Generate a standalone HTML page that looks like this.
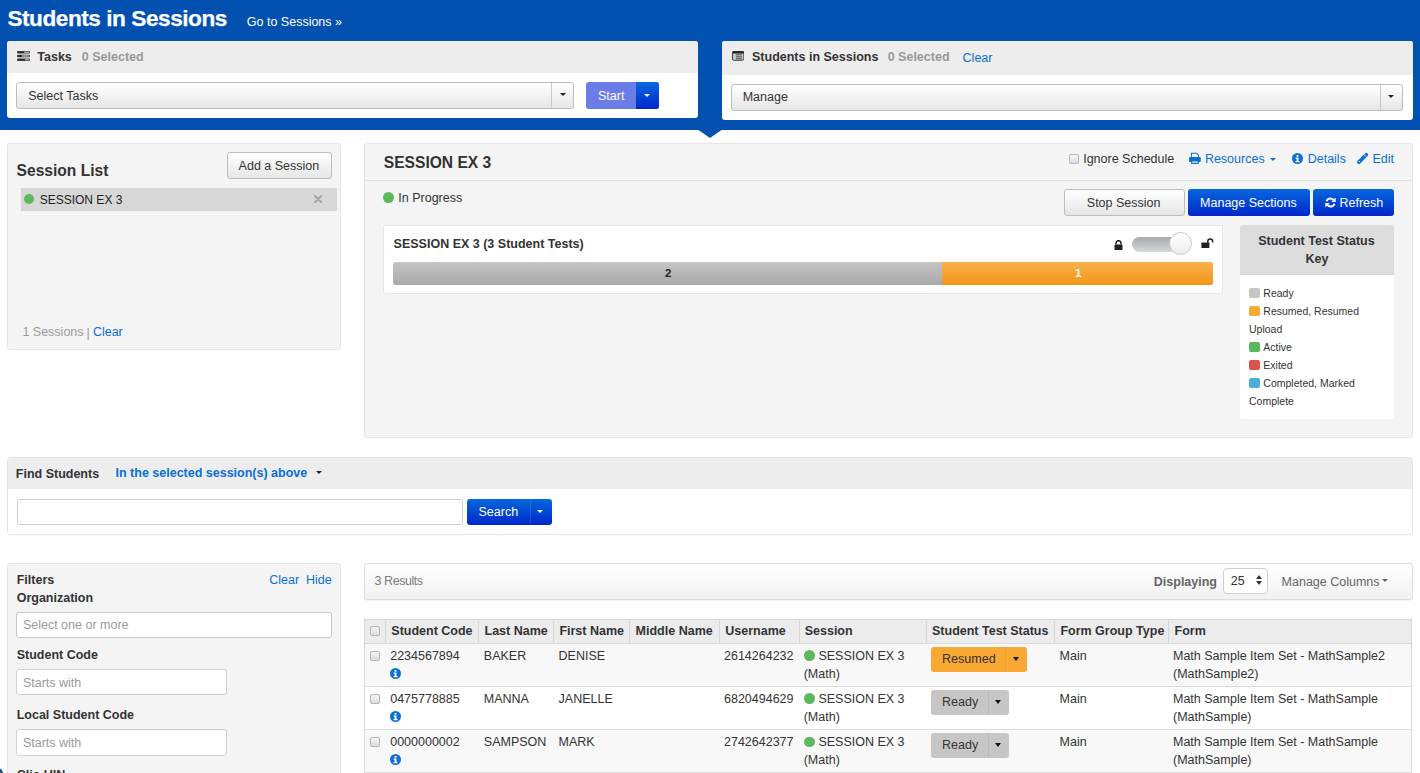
<!DOCTYPE html>
<html><head><meta charset="utf-8"><title>Students in Sessions</title>
<style>
html,body{margin:0;padding:0;}
body{width:1420px;height:773px;overflow:hidden;position:relative;background:#fff;font-family:"Liberation Sans",sans-serif;}
.t{position:absolute;line-height:1;white-space:nowrap;}
.b{position:absolute;}
</style></head><body>
<div class="b" style="left:0px;top:0px;width:1420px;height:130px;background:#0251b1;"></div>
<div class="t" style="left:7.4px;top:8.00px;font-size:22.6px;font-weight:bold;color:#fff;letter-spacing:-0.45px;-webkit-text-stroke:0.25px #fff;">Students in Sessions</div>
<div class="t" style="left:246.8px;top:16.00px;font-size:12.5px;font-weight:normal;color:#fff;">Go to Sessions &raquo;</div>
<div class="b" style="left:697px;top:129px;width:0;height:0;border-left:13.5px solid transparent;border-right:13.5px solid transparent;border-top:9px solid #0251b1;"></div>
<div class="b" style="left:7px;top:41px;width:691px;height:77px;background:#fff;border-radius:3px;overflow:hidden;"><div style="position:absolute;left:0;top:0;right:0;height:32px;background:#ededed;"></div></div>
<svg class="b" style="left:17px;top:51px" width="13" height="10" viewBox="0 0 13 10"><rect x="0" y="0" width="13" height="2.6" rx="1" fill="#333"/><rect x="7" y="0.6" width="5.3" height="1.4" rx=".7" fill="#aaa"/><rect x="0" y="3.7" width="13" height="2.6" rx="1" fill="#333"/><rect x="5" y="4.3" width="7.3" height="1.4" rx=".7" fill="#aaa"/><rect x="0" y="7.4" width="13" height="2.6" rx="1" fill="#333"/><rect x="8" y="8" width="4.3" height="1.4" rx=".7" fill="#aaa"/></svg>
<div class="t" style="left:37.3px;top:51.00px;font-size:12.5px;font-weight:bold;color:#333;">Tasks</div>
<div class="t" style="left:81.8px;top:51.00px;font-size:12.5px;font-weight:bold;color:#999;">0 Selected</div>
<div class="b" style="left:16px;top:82px;width:558px;height:27px;background:linear-gradient(#ffffff,#e6e6e6);border:1px solid #bdbdbd;border-radius:3px;box-sizing:border-box;"></div>
<div class="b" style="left:551px;top:83px;width:1px;height:25px;background:#c8c8c8;"></div>
<div class="b" style="left:559.5px;top:93.2px;width:0;height:0;border-left:3.5px solid transparent;border-right:3.5px solid transparent;border-top:3.5px solid #222;"></div>
<div class="t" style="left:28.2px;top:90.00px;font-size:12.5px;font-weight:normal;color:#333;">Select Tasks</div>
<div class="b" style="left:586px;top:82px;width:73px;height:27px;background:#6a7de6;border-radius:3px;overflow:hidden;"><div style="position:absolute;left:50px;top:0;right:0;bottom:0;background:linear-gradient(#0a6ae0,#0026cc);"></div></div>
<div class="t" style="left:598.0px;top:90.00px;font-size:12.5px;font-weight:normal;color:#fff;">Start</div>
<div class="b" style="left:644.0px;top:93.8px;width:0;height:0;border-left:3.5px solid transparent;border-right:3.5px solid transparent;border-top:3.5px solid #fff;"></div>
<div class="b" style="left:722px;top:41px;width:691px;height:79px;background:#fff;border-radius:3px;overflow:hidden;"><div style="position:absolute;left:0;top:0;right:0;height:34px;background:#ededed;"></div></div>
<svg class="b" style="left:731.9px;top:50.9px" width="12.4" height="9.8" viewBox="0 0 12.4 9.8"><rect x="0.5" y="0.5" width="11.4" height="8.8" rx="1.3" fill="#bdbdbd" stroke="#444" stroke-width="1"/><rect x="0.3" y="0.3" width="11.8" height="2.2" rx="1" fill="#222"/><rect x="4" y="3.3" width="5.9" height="1" fill="#555"/><rect x="4" y="5.3" width="5.9" height="1" fill="#555"/><rect x="4" y="7.2" width="5.9" height="1" fill="#555"/><rect x="1.6" y="3.3" width="1.6" height="1" fill="#ddd"/><rect x="1.6" y="5.3" width="1.6" height="1" fill="#ddd"/><rect x="1.6" y="7.2" width="1.6" height="1" fill="#ddd"/></svg>
<div class="t" style="left:752.0px;top:51.00px;font-size:12.5px;font-weight:bold;color:#333;">Students in Sessions</div>
<div class="t" style="left:887.7px;top:51.00px;font-size:12.5px;font-weight:bold;color:#999;">0 Selected</div>
<div class="t" style="left:962.6px;top:52.00px;font-size:12.5px;font-weight:normal;color:#0a6fd6;">Clear</div>
<div class="b" style="left:731px;top:84px;width:672px;height:27px;background:linear-gradient(#ffffff,#e6e6e6);border:1px solid #bdbdbd;border-radius:3px;box-sizing:border-box;"></div>
<div class="b" style="left:1380px;top:85px;width:1px;height:25px;background:#c8c8c8;"></div>
<div class="b" style="left:1388.3px;top:94.5px;width:0;height:0;border-left:3.5px solid transparent;border-right:3.5px solid transparent;border-top:3.5px solid #222;"></div>
<div class="t" style="left:742.7px;top:91.00px;font-size:12.5px;font-weight:normal;color:#333;">Manage</div>
<div class="b" style="left:7px;top:143px;width:334px;height:207px;background:#f4f4f4;border:1px solid #e5e5e5;border-radius:3px;box-sizing:border-box;"></div>
<div class="t" style="left:16.6px;top:163.00px;font-size:15.6px;font-weight:bold;color:#333;">Session List</div>
<div class="b" style="left:227px;top:152px;width:105px;height:27px;background:linear-gradient(#ffffff,#e6e6e6);border:1px solid #bdbdbd;border-radius:3px;box-sizing:border-box;"></div>
<div class="t" style="left:238.6px;top:160.00px;font-size:12.5px;font-weight:normal;color:#333;">Add a Session</div>
<div class="b" style="left:21px;top:187.5px;width:316px;height:23.5px;background:#d7d7d7;"></div>
<div class="b" style="left:23.5px;top:193.5px;width:10.8px;height:10.8px;border-radius:50%;background:#5cb85c;"></div>
<div class="t" style="left:39.7px;top:194.00px;font-size:12.0px;font-weight:normal;color:#222;">SESSION EX 3</div>
<svg class="b" style="left:313.9px;top:194.7px" width="8.2" height="8.1" viewBox="0 0 8.2 8.1"><path d="M0.9 0.9L7.3 7.2M7.3 0.9L0.9 7.2" stroke="#a3a3a3" stroke-width="2" stroke-linecap="round"/></svg>
<div class="t" style="left:22.4px;top:326.00px;font-size:12.5px;font-weight:normal;color:#999;">1 Sessions</div>
<div class="t" style="left:86.5px;top:327.00px;font-size:12.5px;font-weight:normal;color:#999;">|</div>
<div class="t" style="left:92.9px;top:326.00px;font-size:12.5px;font-weight:normal;color:#0a6fd6;">Clear</div>
<div class="b" style="left:364px;top:143px;width:1049px;height:295px;background:#f4f4f4;border:1px solid #e5e5e5;border-radius:3px;box-sizing:border-box;"></div>
<div class="b" style="left:365px;top:179.5px;width:1047px;height:1.0px;background:#e2e2e2;"></div>
<div class="t" style="left:383.8px;top:155.00px;font-size:15.6px;font-weight:bold;color:#333;">SESSION EX 3</div>
<div class="b" style="left:1069px;top:153.5px;width:10px;height:10.0px;background:linear-gradient(#f6f6f6,#dcdcdc);border:1px solid #b8b8b8;border-radius:2px;box-sizing:border-box;"></div>
<div class="t" style="left:1083.2px;top:153.00px;font-size:12.5px;font-weight:normal;color:#333;">Ignore Schedule</div>
<svg class="b" style="left:1189px;top:152px" width="12" height="12" viewBox="0 0 12 12"><path d="M2.4 5.4V1.2H7.4L9.5 3.3V5.4" fill="#fff" stroke="#0a6fd6" stroke-width="1.05"/><rect x="0" y="5" width="11.8" height="5" rx="1.3" fill="#0a6fd6"/><rect x="2.7" y="8.9" width="6.6" height="2.4" fill="#fff" stroke="#0a6fd6" stroke-width="1.2"/></svg>
<div class="t" style="left:1204.9px;top:153.00px;font-size:12.5px;font-weight:normal;color:#0a6fd6;">Resources</div>
<div class="b" style="left:1269.7px;top:158.2px;width:0;height:0;border-left:3.5px solid transparent;border-right:3.5px solid transparent;border-top:3.5px solid #0a6fd6;"></div>
<svg class="b" style="left:1292.3px;top:152.6px" width="11" height="11" viewBox="0 0 11 11"><circle cx="5.5" cy="5.5" r="5.5" fill="#0a6fd6"/><rect x="4.6" y="2" width="1.9" height="1.7" fill="#fff"/><path d="M3.6 4.5h2.9v3.6h1v1.2H3.6V8.1h1V5.7h-1z" fill="#fff"/></svg>
<div class="t" style="left:1307.7px;top:153.00px;font-size:12.5px;font-weight:normal;color:#0a6fd6;">Details</div>
<svg class="b" style="left:1356px;top:152px" width="13" height="13" viewBox="0 0 13 13"><path d="M2.9 10.1L10.3 2.7" stroke="#0a6fd6" stroke-width="3.7" stroke-linecap="round"/><path d="M7.7 2.2L10.3 4.8" stroke="#f4f4f4" stroke-width="0.8"/><circle cx="3.4" cy="9.6" r="0.7" fill="#f4f4f4"/></svg>
<div class="t" style="left:1372.5px;top:153.00px;font-size:12.5px;font-weight:normal;color:#0a6fd6;">Edit</div>
<div class="b" style="left:383.4px;top:192px;width:10.9px;height:10.9px;border-radius:50%;background:#5cb85c;"></div>
<div class="t" style="left:398.3px;top:192.00px;font-size:12.5px;font-weight:normal;color:#333;">In Progress</div>
<div class="b" style="left:1064px;top:188.5px;width:121px;height:27.0px;background:linear-gradient(#ffffff,#e6e6e6);border:1px solid #bdbdbd;border-radius:3px;box-sizing:border-box;"></div>
<div class="t" style="left:1086.8px;top:197.00px;font-size:12.5px;font-weight:normal;color:#333;">Stop Session</div>
<div class="b" style="left:1188px;top:188.5px;width:122px;height:27.0px;background:linear-gradient(#0568db,#0027cc);border-radius:3px;"></div>
<div class="t" style="left:1200.1px;top:197.00px;font-size:12.5px;font-weight:normal;color:#fff;">Manage Sections</div>
<div class="b" style="left:1313px;top:188.5px;width:81px;height:27.0px;background:linear-gradient(#0568db,#0027cc);border-radius:3px;"></div>
<svg class="b" style="left:1324.8px;top:196.8px" width="11" height="11" viewBox="0 0 11 11"><path d="M9.1 3.8 A4.1 4.1 0 0 0 1.5 4.3" fill="none" stroke="#fff" stroke-width="1.9"/><path d="M10.7 0.6 V5 H6.3 Z" fill="#fff"/><path d="M1.9 7.2 A4.1 4.1 0 0 0 9.5 6.7" fill="none" stroke="#fff" stroke-width="1.9"/><path d="M0.3 10.4 V6 H4.7 Z" fill="#fff"/></svg>
<div class="t" style="left:1339.5px;top:197.00px;font-size:12.5px;font-weight:normal;color:#fff;">Refresh</div>
<div class="b" style="left:383px;top:225px;width:840px;height:69px;background:#fff;border:1px solid #e6e6e6;border-radius:2px;box-sizing:border-box;"></div>
<div class="t" style="left:393.6px;top:238.00px;font-size:12.5px;font-weight:bold;color:#333;">SESSION EX 3 (3 Student Tests)</div>
<div class="b" style="left:393px;top:261.5px;width:820px;height:23.0px;border-radius:3px;overflow:hidden;background:linear-gradient(#c4c4c4,#a9a9a9);"><div style="position:absolute;left:549px;top:0;right:0;bottom:0;background:linear-gradient(#f9b24c,#f29518);"></div></div>
<div class="t" style="left:665.0px;top:268.00px;font-size:11.5px;font-weight:bold;color:#222;">2</div>
<div class="t" style="left:1075.0px;top:268.00px;font-size:11.5px;font-weight:bold;color:#fff;">1</div>
<svg class="b" style="left:1114px;top:239.5px" width="9" height="10.5" viewBox="0 0 9 10.5"><path d="M2 4.6 V3.2 A2.5 2.5 0 0 1 7 3.2 V4.6" fill="none" stroke="#222" stroke-width="1.5"/><rect x="0.5" y="4.5" width="8" height="5.8" rx="0.8" fill="#222"/></svg>
<div class="b" style="left:1132px;top:236.5px;width:59px;height:15.0px;border-radius:8px;background:linear-gradient(#a9aaad,#d6d7d9);"></div>
<div class="b" style="left:1169px;top:232.3px;width:23px;height:23px;border-radius:50%;background:linear-gradient(#ffffff,#ececec);border:1px solid #c9c9c9;box-sizing:border-box;"></div>
<svg class="b" style="left:1200.5px;top:237.5px" width="13" height="10.5" viewBox="0 0 13 10.5"><path d="M6.8 4.8 V3.3 A2.4 2.4 0 0 1 11.6 3.3 V4.6" fill="none" stroke="#222" stroke-width="1.5"/><rect x="0.4" y="4.4" width="8" height="5.8" rx="0.8" fill="#222"/></svg>
<div class="b" style="left:1240px;top:225px;width:154px;height:194px;background:#fff;border-radius:3px;overflow:hidden;"><div style="position:absolute;left:0;top:0;right:0;height:50px;background:#dcdcdc;"></div></div>
<div class="t" style="left:1258.2px;top:235.00px;font-size:12.5px;font-weight:bold;color:#333;">Student Test Status</div>
<div class="t" style="left:1305.5px;top:253.00px;font-size:12.5px;font-weight:bold;color:#333;">Key</div>
<div class="b" style="left:1249px;top:287.8px;width:10.5px;height:10.5px;background:#c6c6c6;border-radius:2px;"></div>
<div class="t" style="left:1263.3px;top:288.00px;font-size:10.5px;font-weight:normal;color:#333;">Ready</div>
<div class="b" style="left:1249px;top:305.8px;width:10.5px;height:10.5px;background:#f9a833;border-radius:2px;"></div>
<div class="t" style="left:1263.3px;top:306.00px;font-size:10.5px;font-weight:normal;color:#333;">Resumed, Resumed</div>
<div class="t" style="left:1249.0px;top:324.00px;font-size:10.5px;font-weight:normal;color:#333;">Upload</div>
<div class="b" style="left:1249px;top:341.7px;width:10.5px;height:10.5px;background:#5cb85c;border-radius:2px;"></div>
<div class="t" style="left:1263.3px;top:342.00px;font-size:10.5px;font-weight:normal;color:#333;">Active</div>
<div class="b" style="left:1249px;top:359.6px;width:10.5px;height:10.5px;background:#d9534f;border-radius:2px;"></div>
<div class="t" style="left:1263.3px;top:360.00px;font-size:10.5px;font-weight:normal;color:#333;">Exited</div>
<div class="b" style="left:1249px;top:377.6px;width:10.5px;height:10.5px;background:#4cb0d6;border-radius:2px;"></div>
<div class="t" style="left:1263.3px;top:378.00px;font-size:10.5px;font-weight:normal;color:#333;">Completed, Marked</div>
<div class="t" style="left:1249.0px;top:396.00px;font-size:10.5px;font-weight:normal;color:#333;">Complete</div>
<div class="b" style="left:7px;top:457px;width:1406px;height:78px;background:#fff;border:1px solid #e5e5e5;border-radius:3px;box-sizing:border-box;overflow:hidden;"><div style="position:absolute;left:0;top:0;right:0;height:31px;background:#ededed;"></div></div>
<div class="t" style="left:15.8px;top:468.00px;font-size:12.5px;font-weight:bold;color:#333;">Find Students</div>
<div class="t" style="left:115.5px;top:467.00px;font-size:12.5px;font-weight:bold;color:#0a6fd6;">In the selected session(s) above</div>
<div class="b" style="left:316.2px;top:471.4px;width:0;height:0;border-left:3.5px solid transparent;border-right:3.5px solid transparent;border-top:3.8px solid #222;"></div>
<div class="b" style="left:17px;top:498.5px;width:446px;height:26.5px;background:#fff;border:1px solid #cfcfcf;border-radius:3px;box-sizing:border-box;"></div>
<div class="b" style="left:467px;top:498.5px;width:85px;height:26.5px;background:linear-gradient(#0568db,#0027cc);border-radius:3px;"><div style="position:absolute;left:63px;top:0;width:1px;bottom:0;background:rgba(255,255,255,0.1);"></div></div>
<div class="t" style="left:478.5px;top:506.00px;font-size:12.5px;font-weight:normal;color:#fff;">Search</div>
<div class="b" style="left:537.3px;top:510.2px;width:0;height:0;border-left:3.5px solid transparent;border-right:3.5px solid transparent;border-top:3.5px solid #fff;"></div>
<div class="b" style="left:7px;top:562.5px;width:334px;height:237.5px;background:#f4f4f4;border:1px solid #e5e5e5;border-radius:3px;box-sizing:border-box;"></div>
<div class="t" style="left:16.7px;top:574.00px;font-size:12.5px;font-weight:bold;color:#333;">Filters</div>
<div class="t" style="left:269.2px;top:574.00px;font-size:12.5px;font-weight:normal;color:#0a6fd6;">Clear</div>
<div class="t" style="left:305.9px;top:574.00px;font-size:12.5px;font-weight:normal;color:#0a6fd6;">Hide</div>
<div class="t" style="left:16.7px;top:592.00px;font-size:12.5px;font-weight:bold;color:#333;">Organization</div>
<div class="b" style="left:16px;top:611.5px;width:316px;height:26.0px;background:#fff;border:1px solid #c8c8c8;border-radius:3px;box-sizing:border-box;"></div>
<div class="t" style="left:22.9px;top:619.00px;font-size:12.5px;font-weight:normal;color:#999;">Select one or more</div>
<div class="t" style="left:16.7px;top:649.00px;font-size:12.5px;font-weight:bold;color:#333;">Student Code</div>
<div class="b" style="left:16px;top:669.2px;width:211px;height:26.299999999999955px;background:#fff;border:1px solid #d2d2d2;border-radius:3px;box-sizing:border-box;"></div>
<div class="t" style="left:22.9px;top:677.00px;font-size:12.5px;font-weight:normal;color:#999;">Starts with</div>
<div class="t" style="left:16.7px;top:709.00px;font-size:12.5px;font-weight:bold;color:#333;">Local Student Code</div>
<div class="b" style="left:16px;top:729.2px;width:211px;height:26.5px;background:#fff;border:1px solid #d2d2d2;border-radius:3px;box-sizing:border-box;"></div>
<div class="t" style="left:22.9px;top:737.00px;font-size:12.5px;font-weight:normal;color:#999;">Starts with</div>
<div class="t" style="left:16.7px;top:769.00px;font-size:12.5px;font-weight:bold;color:#333;">Clio UIN</div>
<div class="b" style="left:-8px;top:768px;width:11px;height:11px;border-radius:50%;background:#1d5a6a;"></div>
<div class="b" style="left:364px;top:562.5px;width:1049px;height:37.0px;background:linear-gradient(#ffffff,#f1f1f1);border:1px solid #dcdcdc;border-radius:3px;box-sizing:border-box;box-shadow:0 1px 1px rgba(0,0,0,0.05);"></div>
<div class="t" style="left:374.6px;top:575.00px;font-size:12.5px;font-weight:normal;color:#7c7c7c;letter-spacing:-0.45px;">3 Results</div>
<div class="t" style="left:1153.8px;top:576.00px;font-size:12.5px;font-weight:bold;color:#666;">Displaying</div>
<div class="b" style="left:1223px;top:567.5px;width:45px;height:26.5px;background:#fff;border:1px solid #d0d0d0;border-radius:4px;box-sizing:border-box;"></div>
<div class="t" style="left:1230.7px;top:575.00px;font-size:12.5px;font-weight:normal;color:#333;">25</div>
<div class="b" style="left:1256px;top:574.5px;width:0;height:0;border-left:3px solid transparent;border-right:3px solid transparent;border-bottom:4.5px solid #333;"></div>
<div class="b" style="left:1256px;top:581px;width:0;height:0;border-left:3px solid transparent;border-right:3px solid transparent;border-top:4.5px solid #333;"></div>
<div class="t" style="left:1281.6px;top:576.00px;font-size:12.5px;font-weight:normal;color:#666;">Manage Columns</div>
<div class="b" style="left:1382.2px;top:578.8px;width:0;height:0;border-left:3.75px solid transparent;border-right:3.75px solid transparent;border-top:3.5px solid #666;"></div>
<div class="b" style="left:364px;top:618.5px;width:1048px;height:154.5px;background:#fff;border:1px solid #d9d9d9;box-sizing:border-box;"></div>
<div class="b" style="left:365px;top:619.5px;width:1046px;height:23.5px;background:#ececec;"></div>
<div class="b" style="left:365px;top:644px;width:1046px;height:42px;background:#f8f8f8;"></div>
<div class="b" style="left:365px;top:643px;width:1046px;height:1px;background:#dadada;"></div>
<div class="b" style="left:365px;top:687px;width:1046px;height:42px;background:#ffffff;"></div>
<div class="b" style="left:365px;top:686px;width:1046px;height:1px;background:#dadada;"></div>
<div class="b" style="left:365px;top:730px;width:1046px;height:42px;background:#f8f8f8;"></div>
<div class="b" style="left:365px;top:729px;width:1046px;height:1px;background:#dadada;"></div>
<div class="b" style="left:365px;top:772px;width:1046px;height:1px;background:#dadada;"></div>
<div class="b" style="left:385px;top:619.5px;width:1px;height:23.5px;background:#d6d6d6;"></div>
<div class="b" style="left:478px;top:619.5px;width:1px;height:23.5px;background:#d6d6d6;"></div>
<div class="b" style="left:553px;top:619.5px;width:1px;height:23.5px;background:#d6d6d6;"></div>
<div class="b" style="left:629px;top:619.5px;width:1px;height:23.5px;background:#d6d6d6;"></div>
<div class="b" style="left:719px;top:619.5px;width:1px;height:23.5px;background:#d6d6d6;"></div>
<div class="b" style="left:799px;top:619.5px;width:1px;height:23.5px;background:#d6d6d6;"></div>
<div class="b" style="left:926px;top:619.5px;width:1px;height:23.5px;background:#d6d6d6;"></div>
<div class="b" style="left:1054px;top:619.5px;width:1px;height:23.5px;background:#d6d6d6;"></div>
<div class="b" style="left:1168px;top:619.5px;width:1px;height:23.5px;background:#d6d6d6;"></div>
<div class="b" style="left:370px;top:625.5px;width:10px;height:10.0px;background:linear-gradient(#f6f6f6,#dcdcdc);border:1px solid #b5b5b5;border-radius:2px;box-sizing:border-box;"></div>
<div class="t" style="left:391.3px;top:625.00px;font-size:12.5px;font-weight:bold;color:#333;">Student Code</div>
<div class="t" style="left:484.5px;top:625.00px;font-size:12.5px;font-weight:bold;color:#333;">Last Name</div>
<div class="t" style="left:559.4px;top:625.00px;font-size:12.5px;font-weight:bold;color:#333;">First Name</div>
<div class="t" style="left:635.6px;top:625.00px;font-size:12.5px;font-weight:bold;color:#333;">Middle Name</div>
<div class="t" style="left:725.3px;top:625.00px;font-size:12.5px;font-weight:bold;color:#333;">Username</div>
<div class="t" style="left:804.7px;top:625.00px;font-size:12.5px;font-weight:bold;color:#333;">Session</div>
<div class="t" style="left:932.0px;top:625.00px;font-size:12.5px;font-weight:bold;color:#333;">Student Test Status</div>
<div class="t" style="left:1060.4px;top:625.00px;font-size:12.5px;font-weight:bold;color:#333;">Form Group Type</div>
<div class="t" style="left:1174.5px;top:625.00px;font-size:12.5px;font-weight:bold;color:#333;">Form</div>
<div class="b" style="left:370px;top:650.8px;width:10px;height:10.0px;background:linear-gradient(#f6f6f6,#dcdcdc);border:1px solid #b5b5b5;border-radius:2px;box-sizing:border-box;"></div>
<div class="t" style="left:390.2px;top:650.00px;font-size:12.5px;font-weight:normal;color:#333;">2234567894</div>
<svg class="b" style="left:390.2px;top:668.2px" width="11" height="11" viewBox="0 0 11 11"><circle cx="5.5" cy="5.5" r="5.5" fill="#0a6fd6"/><rect x="4.6" y="2" width="1.9" height="1.7" fill="#fff"/><path d="M3.6 4.5h2.9v3.6h1v1.2H3.6V8.1h1V5.7h-1z" fill="#fff"/></svg>
<div class="t" style="left:483.8px;top:650.00px;font-size:12.5px;font-weight:normal;color:#333;">BAKER</div>
<div class="t" style="left:558.6px;top:650.00px;font-size:12.5px;font-weight:normal;color:#333;">DENISE</div>
<div class="t" style="left:724.0px;top:650.00px;font-size:12.5px;font-weight:normal;color:#333;">2614264232</div>
<div class="b" style="left:804px;top:650.3px;width:10.8px;height:10.8px;border-radius:50%;background:#5cb85c;"></div>
<div class="t" style="left:818.4px;top:650.00px;font-size:12.5px;font-weight:normal;color:#333;">SESSION EX 3</div>
<div class="t" style="left:803.7px;top:668.00px;font-size:12.5px;font-weight:normal;color:#333;">(Math)</div>
<div class="b" style="left:931px;top:647.2px;width:96px;height:24.899999999999977px;background:#f9a833;border-radius:3px;"><div style="position:absolute;left:74px;top:0;width:1px;bottom:0;background:rgba(0,0,0,0.06);"></div></div>
<div class="t" style="left:942.1px;top:653.00px;font-size:12.5px;font-weight:normal;color:#333;">Resumed</div>
<div class="b" style="left:1012.8px;top:657.1px;width:0;height:0;border-left:3.5px solid transparent;border-right:3.5px solid transparent;border-top:4px solid #111;"></div>
<div class="t" style="left:1059.6px;top:650.00px;font-size:12.5px;font-weight:normal;color:#333;">Main</div>
<div class="t" style="left:1173.0px;top:650.00px;font-size:12.5px;font-weight:normal;color:#333;">Math Sample Item Set - MathSample2</div>
<div class="t" style="left:1173.0px;top:668.00px;font-size:12.5px;font-weight:normal;color:#333;">(MathSample2)</div>
<div class="b" style="left:370px;top:693.9px;width:10px;height:10.0px;background:linear-gradient(#f6f6f6,#dcdcdc);border:1px solid #b5b5b5;border-radius:2px;box-sizing:border-box;"></div>
<div class="t" style="left:390.2px;top:693.00px;font-size:12.5px;font-weight:normal;color:#333;">0475778885</div>
<svg class="b" style="left:390.2px;top:711.3px" width="11" height="11" viewBox="0 0 11 11"><circle cx="5.5" cy="5.5" r="5.5" fill="#0a6fd6"/><rect x="4.6" y="2" width="1.9" height="1.7" fill="#fff"/><path d="M3.6 4.5h2.9v3.6h1v1.2H3.6V8.1h1V5.7h-1z" fill="#fff"/></svg>
<div class="t" style="left:483.8px;top:693.00px;font-size:12.5px;font-weight:normal;color:#333;">MANNA</div>
<div class="t" style="left:558.6px;top:693.00px;font-size:12.5px;font-weight:normal;color:#333;">JANELLE</div>
<div class="t" style="left:724.0px;top:693.00px;font-size:12.5px;font-weight:normal;color:#333;">6820494629</div>
<div class="b" style="left:804px;top:693.4px;width:10.8px;height:10.8px;border-radius:50%;background:#5cb85c;"></div>
<div class="t" style="left:818.4px;top:693.00px;font-size:12.5px;font-weight:normal;color:#333;">SESSION EX 3</div>
<div class="t" style="left:803.7px;top:711.00px;font-size:12.5px;font-weight:normal;color:#333;">(Math)</div>
<div class="b" style="left:931px;top:690.3000000000001px;width:78px;height:24.899999999999977px;background:#c6c6c6;border-radius:3px;"><div style="position:absolute;left:57px;top:0;width:1px;bottom:0;background:rgba(0,0,0,0.06);"></div></div>
<div class="t" style="left:942.1px;top:696.00px;font-size:12.5px;font-weight:normal;color:#333;">Ready</div>
<div class="b" style="left:994.8px;top:700.2px;width:0;height:0;border-left:3.5px solid transparent;border-right:3.5px solid transparent;border-top:4px solid #111;"></div>
<div class="t" style="left:1059.6px;top:693.00px;font-size:12.5px;font-weight:normal;color:#333;">Main</div>
<div class="t" style="left:1173.0px;top:693.00px;font-size:12.5px;font-weight:normal;color:#333;">Math Sample Item Set - MathSample</div>
<div class="t" style="left:1173.0px;top:711.00px;font-size:12.5px;font-weight:normal;color:#333;">(MathSample)</div>
<div class="b" style="left:370px;top:737.0px;width:10px;height:10.0px;background:linear-gradient(#f6f6f6,#dcdcdc);border:1px solid #b5b5b5;border-radius:2px;box-sizing:border-box;"></div>
<div class="t" style="left:390.2px;top:736.00px;font-size:12.5px;font-weight:normal;color:#333;">0000000002</div>
<svg class="b" style="left:390.2px;top:754.4px" width="11" height="11" viewBox="0 0 11 11"><circle cx="5.5" cy="5.5" r="5.5" fill="#0a6fd6"/><rect x="4.6" y="2" width="1.9" height="1.7" fill="#fff"/><path d="M3.6 4.5h2.9v3.6h1v1.2H3.6V8.1h1V5.7h-1z" fill="#fff"/></svg>
<div class="t" style="left:483.8px;top:736.00px;font-size:12.5px;font-weight:normal;color:#333;">SAMPSON</div>
<div class="t" style="left:558.6px;top:736.00px;font-size:12.5px;font-weight:normal;color:#333;">MARK</div>
<div class="t" style="left:724.0px;top:736.00px;font-size:12.5px;font-weight:normal;color:#333;">2742642377</div>
<div class="b" style="left:804px;top:736.5px;width:10.8px;height:10.8px;border-radius:50%;background:#5cb85c;"></div>
<div class="t" style="left:818.4px;top:736.00px;font-size:12.5px;font-weight:normal;color:#333;">SESSION EX 3</div>
<div class="t" style="left:803.7px;top:754.00px;font-size:12.5px;font-weight:normal;color:#333;">(Math)</div>
<div class="b" style="left:931px;top:733.4000000000001px;width:78px;height:24.899999999999977px;background:#c6c6c6;border-radius:3px;"><div style="position:absolute;left:57px;top:0;width:1px;bottom:0;background:rgba(0,0,0,0.06);"></div></div>
<div class="t" style="left:942.1px;top:739.00px;font-size:12.5px;font-weight:normal;color:#333;">Ready</div>
<div class="b" style="left:994.8px;top:743.3px;width:0;height:0;border-left:3.5px solid transparent;border-right:3.5px solid transparent;border-top:4px solid #111;"></div>
<div class="t" style="left:1059.6px;top:736.00px;font-size:12.5px;font-weight:normal;color:#333;">Main</div>
<div class="t" style="left:1173.0px;top:736.00px;font-size:12.5px;font-weight:normal;color:#333;">Math Sample Item Set - MathSample</div>
<div class="t" style="left:1173.0px;top:754.00px;font-size:12.5px;font-weight:normal;color:#333;">(MathSample)</div>
</body></html>
